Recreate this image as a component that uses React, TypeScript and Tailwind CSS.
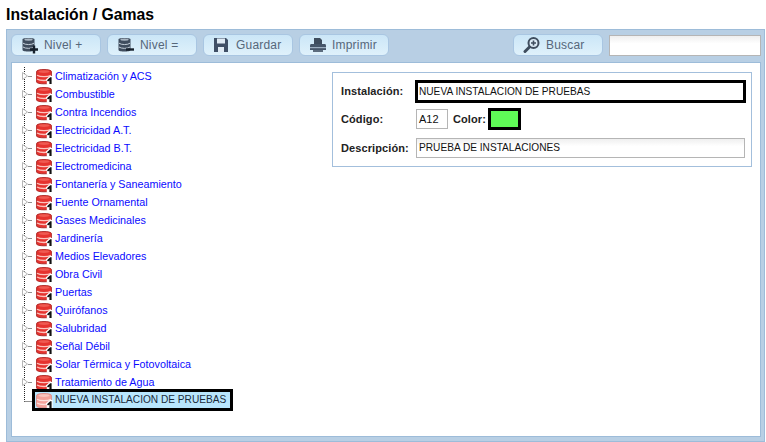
const FAMILIES = [
  "Climatización y ACS",
  "Combustible",
  "Contra Incendios",
  "Electricidad A.T.",
  "Electricidad B.T.",
  "Electromedicina",
  "Fontanería y Saneamiento",
  "Fuente Ornamental",
  "Gases Medicinales",
  "Jardinería",
  "Medios Elevadores",
  "Obra Civil",
  "Puertas",
  "Quirófanos",
  "Salubridad",
  "Señal Débil",
  "Solar Térmica y Fotovoltaica",
  "Tratamiento de Agua",
];

function DbIcon({ badge }: { badge: "plus" | "minus" }) {
  return (
    <svg width="18" height="18" viewBox="0 0 18 18" className="shrink-0">
      <path d="M1.5 3.5C1.5 1.6 13.5 1.6 13.5 3.5V14C13.5 16 1.5 16 1.5 14Z" fill="#3f4d5e" />
      <ellipse cx="7.5" cy="3.6" rx="4.2" ry="1.2" fill="#aab6c2" />
      <path d="M2 7.2C4 9 11 9 13 7.2M2 11C4 12.8 11 12.8 13 11" stroke="#c5d0da" strokeWidth="1" fill="none" />
      {badge === "plus" ? (
        <path d="M9 13.5H17M13 9.5V17.5" stroke="#16202c" strokeWidth="2.4" />
      ) : (
        <path d="M9 13.5H17" stroke="#16202c" strokeWidth="2.4" />
      )}
    </svg>
  );
}

function SaveIcon() {
  return (
    <svg width="16" height="16" viewBox="0 0 16 16" className="shrink-0">
      <path d="M1 1H13L15 3V15H1Z" fill="#3f4f66" />
      <rect x="4" y="1.5" width="8" height="5" fill="#dfeaf4" />
      <rect x="5" y="10" width="6" height="5" fill="#dfeaf4" />
    </svg>
  );
}

function PrintIcon() {
  return (
    <svg width="18" height="16" viewBox="0 0 18 16" className="shrink-0">
      <path d="M5 1H11L13 3V7H5Z" fill="#3f4d5e" />
      <path d="M2 7H16Q17 7 17 8.5V13H1V8.5Q1 7 2 7Z" fill="#46566a" />
      <rect x="1" y="10" width="16" height="1.2" fill="#9eb0c2" />
      <rect x="4" y="13" width="10" height="2" fill="#5c6c7e" />
    </svg>
  );
}

function SearchIcon() {
  return (
    <svg width="18" height="18" viewBox="0 0 18 18" className="shrink-0">
      <circle cx="10.5" cy="7" r="5" fill="#dcebf6" stroke="#3f4d5e" strokeWidth="2" />
      <path d="M8 7H13M10.5 4.5V9.5" stroke="#3f4d5e" strokeWidth="1.6" />
      <path d="M6.5 11L2 15.5" stroke="#3f4d5e" strokeWidth="3" strokeLinecap="round" />
    </svg>
  );
}

function ToolButton({ icon, label }: { icon: React.ReactNode; label: string }) {
  return (
    <button className="flex h-[22px] w-[90px] items-center rounded-[6px] border border-[#a9c6e2] bg-linear-to-b from-[#cbe6f7] to-[#dff1fb] pl-[9px] text-[12px] tracking-[0.2px] text-[#56677a]">
      <span className="flex w-[23px] shrink-0 items-center">{icon}</span>
      <span>{label}</span>
    </button>
  );
}

function GamaIcon({ pale }: { pale?: boolean }) {
  const body = pale ? "#f4a29b" : "#e5332f";
  const edge = pale ? "#dc8a84" : "#a82320";
  const top = pale ? "#f9c4be" : "#ef5a52";
  const band = pale ? "#fde0dc" : "#fcc4be";
  return (
    <svg width="17" height="17" viewBox="0 0 17 17" className="shrink-0">
      <path d="M.6 3.5C.6 .9 15.4 .9 15.4 3.5V14C15.4 16.4 .6 16.4 .6 14Z" fill={body} stroke={edge} strokeWidth="0.9" />
      <ellipse cx="8" cy="3.6" rx="5.5" ry="1.4" fill={top} />
      <path d="M1 7.2C4 9.2 12 9.2 15 7.2M1 11C4 13 12 13 15 11" stroke={band} strokeWidth="1.3" fill="none" />
      <path d="M9.8 11.5L13.8 8H16.6V16.6H10.8V13Z" fill="#fff" />
      <path d="M11 12.2L14.2 9.2H15.6V16H13.4V12.4L12 13.6Z" fill="#111" />
    </svg>
  );
}

// tree lines: dotted trunk, stub to the icon, grey expander triangle
function Branch({ last }: { last?: boolean }) {
  return (
    <svg width="16" height="18" viewBox="0 0 16 18" className="shrink-0">
      <path d={last ? "M4.5 0V10.5" : "M4.5 0V18"} stroke="#222" strokeDasharray="1 1" fill="none" />
      {last ? (
        <path d="M4.5 10.5H13" stroke="#222" strokeDasharray="1 1" fill="none" />
      ) : (
        <>
          <path d="M2.5 5.5L7.5 9L2.5 12.5Z" fill="#fff" stroke="#b5b5b5" />
          <path d="M8.5 9.5H12" stroke="#222" strokeDasharray="1 1" fill="none" />
        </>
      )}
    </svg>
  );
}

function FieldLabel({ children, className }: { children: string; className?: string }) {
  return <span className={"text-[11px] font-bold tracking-[0.1px] text-[#222] " + (className ?? "")}>{children}</span>;
}

export default function App() {
  return (
    <div className="flex h-[442px] w-[766px] flex-col overflow-hidden bg-white font-['Liberation_Sans',Arial,sans-serif]">
      <h1 className="mt-[6px] ml-[6px] h-[17px] text-[15.75px] leading-[17px] font-bold text-black">Instalación / Gamas</h1>

      <div className="mt-[6px] ml-[6px] flex h-[413px] w-[759px] flex-col border border-[#9dbcd9] bg-[#b8cfe4] pt-[4px] pl-[4px]">
        <div className="flex h-[22px] w-[750px] items-center gap-[6px]">
          <ToolButton icon={<DbIcon badge="plus" />} label="Nivel +" />
          <ToolButton icon={<DbIcon badge="minus" />} label="Nivel =" />
          <ToolButton icon={<SaveIcon />} label="Guardar" />
          <ToolButton icon={<PrintIcon />} label="Imprimir" />
          <div className="flex-1" />
          <ToolButton icon={<SearchIcon />} label="Buscar" />
          <div className="h-[21px] w-[152px] border border-[#b5b5b5] bg-linear-to-b from-[#efefef] to-white to-40%" />
        </div>

        <div className="mt-[6px] flex h-[375px] w-[750px] items-start border border-[#9dbcd9] bg-white">
          <div className="ml-[8px] flex w-[312px] shrink-0 flex-col pt-[4px]">
            {FAMILIES.map((name) => (
              <div key={name} className="flex h-[18px] items-center">
                <Branch />
                <GamaIcon />
                <span className="ml-[2px] text-[10.75px] text-[#0a0aff]">{name}</span>
              </div>
            ))}
            <div className="flex h-[18px] items-center">
              <Branch last />
              <div className="-ml-[2px] flex h-[18px] w-[197px] items-center bg-[#b9e6fd] pl-[2px] outline-[3px] -outline-offset-1 outline-black outline-solid">
                <GamaIcon pale />
                <span className="ml-[2px] text-[10.15px] whitespace-nowrap text-[#1a2a3a]">NUEVA INSTALACION DE PRUEBAS</span>
              </div>
            </div>
          </div>

          <div className="mt-[9px] flex h-[95px] w-[420px] shrink-0 flex-col border border-[#a3bfdc] pt-[6px] pl-[8px]">
            <div className="flex h-[23px] items-center pt-[1px]">
              <FieldLabel className="w-[74px]">Instalación:</FieldLabel>
              <div className="flex h-[23px] w-[331px] items-center border-[3px] border-black pt-[1px] pl-[1px] text-[10.15px] text-[#111]">
                NUEVA INSTALACION DE PRUEBAS
              </div>
            </div>
            <div className="mt-[6px] flex h-[22px] items-center">
              <FieldLabel className="w-[75px]">Código:</FieldLabel>
              <div className="flex h-[20px] w-[32px] items-center border border-[#b5b5b5] pl-[2px] text-[11px] text-[#111]">A12</div>
              <FieldLabel className="ml-[5px] w-[35px]">Color:</FieldLabel>
              <div className="h-[22px] w-[33px] border-[3px] border-black bg-[#5ffb57]" />
            </div>
            <div className="mt-[7px] flex h-[21px] items-center pt-[1px]">
              <FieldLabel className="w-[75px]">Descripción:</FieldLabel>
              <div className="flex h-[20px] w-[329px] items-center border border-[#b5b5b5] bg-linear-to-b from-[#efefef] to-white to-40% pl-[2px] text-[10.15px] text-[#111]">
                PRUEBA DE INSTALACIONES
              </div>
            </div>
          </div>
        </div>
      </div>
    </div>
  );
}
